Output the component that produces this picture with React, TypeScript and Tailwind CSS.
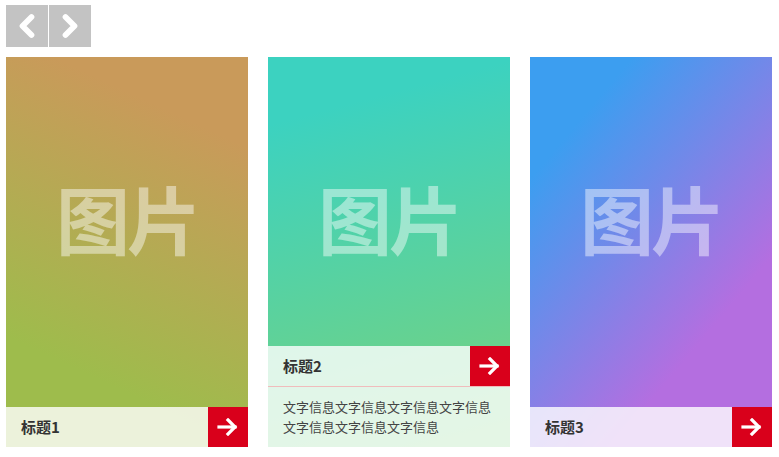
import { ChevronLeft, ChevronRight } from 'lucide-react';

const cards = [
  {
    title: '标题1',
    bg: 'bg-[linear-gradient(205deg,#c99a5a_18%,#9ebc4c_78%)]',
    open: false,
  },
  {
    title: '标题2',
    bg: 'bg-[linear-gradient(165deg,#3cd2c0_15%,#7ad27a_100%)]',
    open: true,
  },
  {
    title: '标题3',
    bg: 'bg-[linear-gradient(130deg,#3c9ef0_18%,#b46ee0_72%)]',
    open: false,
  },
];

function Arrow() {
  return (
    <svg width="22" height="18" viewBox="0 0 22 18" fill="none" stroke="white" strokeWidth="3.2" strokeLinecap="square">
      <path d="M2 9h16" />
      <path d="M11 2l7 7-7 7" />
    </svg>
  );
}

export default function App() {
  return (
    <main className="w-[779px] h-[457px] bg-white px-[6px] pt-[5px] font-['Noto_Sans_CJK_SC',sans-serif] text-[#333]">
      {/* prev / next */}
      <div className="flex gap-px">
        <button className="w-[42px] h-[42px] bg-[#c3c3c3] flex items-center justify-center">
          <ChevronLeft size={36} color="white" strokeWidth={3.8} />
        </button>
        <button className="w-[42px] h-[42px] bg-[#c3c3c3] flex items-center justify-center">
          <ChevronRight size={36} color="white" strokeWidth={3.8} />
        </button>
      </div>

      <div className="flex gap-5 mt-[10px]">
        {cards.map((card, i) => (
          <div key={i} className={`relative w-[242px] h-[390px] overflow-hidden ${card.bg}`}>
            <div className="flex justify-center pt-[123px]">
              <span className="text-[74px] leading-none font-bold text-white/45 tracking-[-3px]">图片</span>
            </div>
            <div className="absolute left-0 right-0 bottom-0 bg-white/80">
              <div className="flex h-10 items-center">
                <span className="flex-1 pl-[15px] text-[15px] font-bold">{card.title}</span>
                <div className="w-10 h-10 bg-[#d9001b] flex items-center justify-center">
                  <Arrow />
                </div>
              </div>
              {card.open && (
                <div className="border-t border-[#f0bcbc] px-[15px] py-[10px] text-[13px] leading-5 text-[#444]">
                  文字信息文字信息文字信息文字信息文字信息文字信息文字信息
                </div>
              )}
            </div>
          </div>
        ))}
      </div>
    </main>
  );
}
